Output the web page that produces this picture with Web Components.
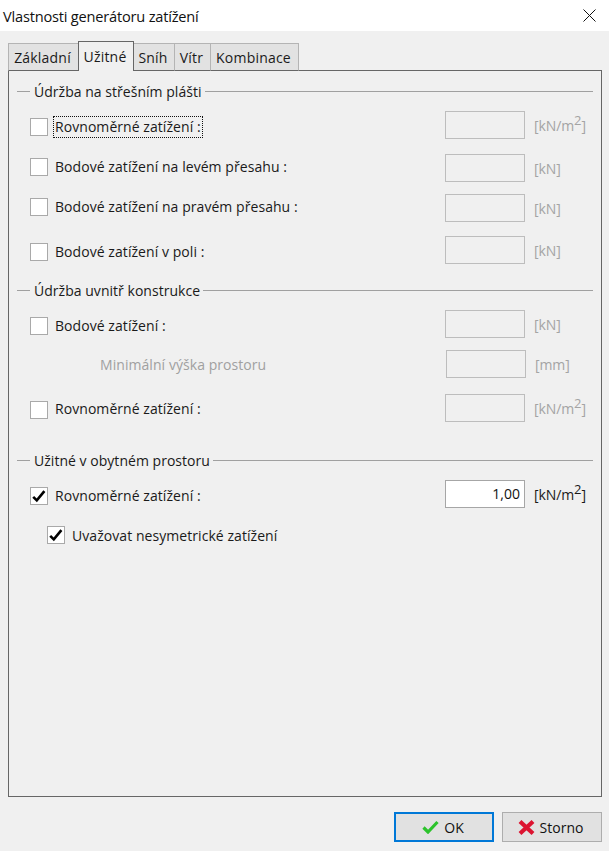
<!DOCTYPE html>
<html lang="cs"><head><meta charset="utf-8">
<style>
html,body{margin:0;padding:0;height:851px;overflow:hidden;background:#f0f0f0}
body{font:14px "Open Sans","Noto Sans",sans-serif;color:#1a1a1a}
</style></head><body>
<load-dialog></load-dialog>
<script>
const def=(n,html)=>customElements.define(n,class extends HTMLElement{
  connectedCallback(){ if(this.shadowRoot)return; const s=this.attachShadow({mode:'open'}); s.innerHTML=typeof html==='function'?html(this):html; }
});
def('title-bar',`<style>
:host{display:flex;height:31px;background:#fff;align-items:center;justify-content:space-between;padding:0 13px 0 3px;font-size:14.6px;letter-spacing:-.2px;color:#111}
svg{display:block}
</style><span><slot></slot></span><svg width="13" height="13" viewBox="0 0 13 13"><path d="M.5.5l12 12M12.5.5l-12 12" stroke="#111" stroke-width="1" fill="none"/></svg>`);
def('tab-item',t=>`<style>
:host{display:flex;align-items:center;justify-content:center;box-sizing:border-box;height:28px;margin-top:2px;padding-right:2px;width:${t.getAttribute('w')}px;background:#e2e2e2;border:1px solid #b4b4b4;border-bottom:1px solid #666;margin-right:-1px;letter-spacing:.2px;color:#1a1a1a;font-size:14px}
:host([active]){height:30px;margin-top:0;margin-bottom:-1px;background:#f0f0f0;border-color:#666;border-bottom:0;z-index:1;position:relative}
</style><slot></slot>`);
def('tab-bar',`<style>:host{display:flex;align-items:flex-start;height:29px;padding-left:8px;margin-top:10px;position:relative;z-index:1}</style><slot></slot>`);
def('load-group',`<style>
:host{display:block}
.leg{display:flex;align-items:center;height:20px;font-size:14px;letter-spacing:.03px;color:#1a1a1a}
.leg i{display:block;height:1px;background:#a0a0a0}
.leg i:first-child{width:13px;margin-right:4px}
.leg i:last-child{flex:1;margin-left:3px}
</style><div class="leg"><i></i><span><slot name="legend"></slot></span><i></i></div><slot></slot>`);
def('check-box',t=>`<style>
:host{display:block;box-sizing:border-box;width:18px;height:18px;background:#fff;border:1px solid #a9a9a9;flex:none}
svg{display:block;width:16px;height:16px}
</style>${t.hasAttribute('checked')?'<svg viewBox="0 0 16 16"><path d="M2.200 8.800l3.600 3.600L13.400 3.200" fill="none" stroke="#000" stroke-width="2.600"/></svg>':''}`);
def('num-field',t=>`<style>
:host{display:block;box-sizing:border-box;width:80px;height:28px;border:1px solid #bdbdbd;background:transparent;text-align:right;line-height:26px;padding-right:4px;font-size:14px;color:#111}
:host([on]){background:#fff;border-color:#a6a6a6}
</style><slot></slot>`);
def('load-row',t=>{
 const off=t.hasAttribute('disabled'),on=t.hasAttribute('checked'),unit=t.getAttribute('unit');
 const ind=+(t.getAttribute('indent')||0),dy=+(t.getAttribute('dy')||0),h=+(t.getAttribute('h')||28),nb=t.hasAttribute('nobox');
 const ly=t.hasAttribute('ly')?+t.getAttribute('ly'):dy;
 return `<style>
:host{display:flex;align-items:center;height:${h}px;margin-top:${t.getAttribute('mt')||0}px;padding-left:${13+ind}px;position:relative}
.cb{margin-top:${2*dy}px}
.lab{margin-top:${2*ly}px;padding:0 1px;color:#1a1a1a;white-space:nowrap;border:1px dotted transparent;line-height:20px;margin-left:5px;letter-spacing:.06px}
.lab.f{border-color:#111}
.sub{color:#a0a0a0;margin-left:68px}
.grow{flex:1}
.u{width:${nb?67:68}px;padding-left:9px;box-sizing:border-box;letter-spacing:-.1px;color:${off?'#a4a4a4':'#1a1a1a'};white-space:nowrap}
.shift{margin-left:1px}
sup{font-size:13px;line-height:0;vertical-align:6px;letter-spacing:0}
</style>
${nb?`<span class="lab sub"><slot></slot></span>`:`<check-box class="cb" ${on?'checked':''}></check-box><span class="lab ${t.hasAttribute('focus')?'f':''}"><slot></slot></span>`}
<span class="grow"></span>
${unit?`<num-field class="${nb?'shift':''}" ${on?'on':''}>${t.getAttribute('value')||''}</num-field><span class="u">${unit==='m2'?'[kN/m<sup>2</sup>]':'['+unit+']'}</span>`:''}`;
});
def('tab-panel',`<style>:host{display:block;box-sizing:border-box;margin:0 7px 0 8px;height:727px;border:1px solid #666;padding:10px 8px 0 8px;background:#f0f0f0}</style><slot></slot>`);
def('dlg-button',t=>`<style>
:host{display:flex;align-items:center;justify-content:center;gap:5px;box-sizing:border-box;width:100px;height:30px;padding-right:${t.getAttribute('icon')==='ok'?2:3}px;background:#e1e1e1;border:1px solid #adadad;font-size:14px;color:#111;letter-spacing:.02px}
:host([def]){border:2px solid #0078d7}
svg{display:block}
</style>${t.getAttribute('icon')==='ok'
?'<svg width="17" height="14" viewBox="0 0 17 14"><path d="M1.500 7.500l4.500 4.500L15.500 2" fill="none" stroke="#2cc32c" stroke-width="3.200"/></svg>'
:'<svg width="17" height="17" viewBox="0 0 17 17"><path d="M2 2.500l13 12M15 2.500l-13 12" fill="none" stroke="#dc1431" stroke-width="4.200"/></svg>'}<slot></slot>`);
def('button-row',`<style>:host{display:flex;justify-content:flex-end;gap:8px;padding:15px 7px 0 0}</style><slot></slot>`);
def('load-dialog',`<style>:host{display:block;width:609px;height:851px;overflow:hidden;background:#f0f0f0}</style>
<title-bar>Vlastnosti generátoru zatížení</title-bar>
<tab-bar>
 <tab-item w="71">Základní</tab-item><tab-item w="56" active>Užitné</tab-item><tab-item w="42">Sníh</tab-item><tab-item w="37">Vítr</tab-item><tab-item w="89">Kombinace</tab-item>
</tab-bar>
<tab-panel>
 <load-group><span slot="legend">Údržba na střešním plášti</span>
  <load-row mt="10" dy="2" focus disabled unit="m2">Rovnoměrné zatížení :</load-row>
  <load-row mt="15" dy="-1" disabled unit="kN">Bodové zatížení na levém přesahu :</load-row>
  <load-row mt="12" dy="-1" disabled unit="kN">Bodové zatížení na pravém přesahu :</load-row>
  <load-row mt="14" dy="2" disabled unit="kN">Bodové zatížení v poli :</load-row>
 </load-group>
 <load-group style="margin-top:16px"><span slot="legend">Údržba uvnitř konstrukce</span>
  <load-row mt="10" dy="2" disabled unit="kN">Bodové zatížení :</load-row>
  <load-row mt="12" nobox ly="1" disabled unit="mm">Minimální výška prostoru</load-row>
  <load-row mt="16" dy="2" ly="1" disabled unit="m2">Rovnoměrné zatížení :</load-row>
 </load-group>
 <load-group style="margin-top:28px"><span slot="legend">Užitné v obytném prostoru</span>
  <load-row mt="10" dy="2" checked unit="m2" value="1,00">Rovnoměrné zatížení :</load-row>
  <load-row mt="18" h="18" ly="1" checked indent="17">Uvažovat nesymetrické zatížení</load-row>
 </load-group>
</tab-panel>
<button-row><dlg-button icon="ok" def>OK</dlg-button><dlg-button icon="x">Storno</dlg-button></button-row>`);
</script>
</body></html>
